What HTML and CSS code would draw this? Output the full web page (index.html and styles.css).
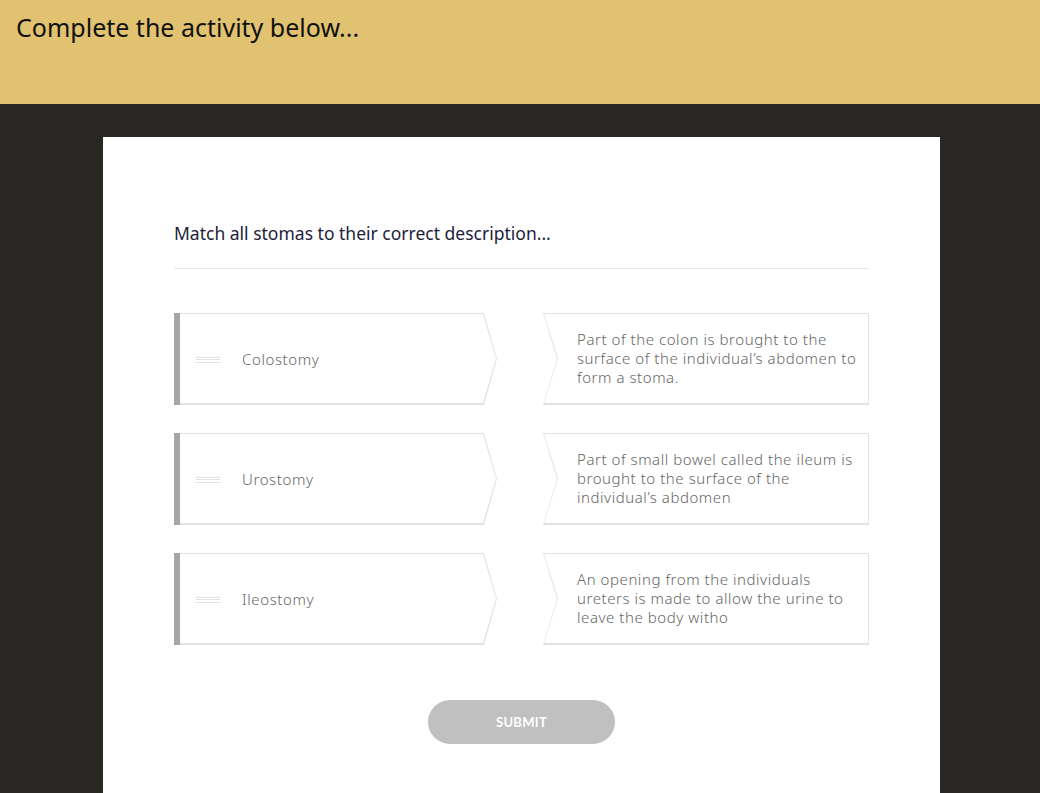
FILE: index.html
```html
<!DOCTYPE html>
<html lang="en">
  <head>
    <meta charset="UTF-8" />
    <meta name="viewport" content="width=device-width, initial-scale=1.0" />
    <title>Activity - Match</title>
    <link rel="stylesheet" href="styles.css">
  </head>
  <body>
    <header class="top-bar">
      <h1>Complete the activity below...</h1>
    </header>
    <main class="stage">
      <div class="activity">
        <p class="question">Match all stomas to their correct description...</p>
        <div class="divider"></div>

        <div class="pairs">
          <div class="term">
            <div class="term-inner">
              <span class="handle"><i></i><i></i><i></i></span>
              <span>Colostomy</span>
            </div>
          </div>
          <div class="desc">
            <div class="desc-inner">
              Part of the colon is brought to the surface of the individual’s abdomen to form a stoma.
            </div>
          </div>

          <div class="term">
            <div class="term-inner">
              <span class="handle"><i></i><i></i><i></i></span>
              <span>Urostomy</span>
            </div>
          </div>
          <div class="desc">
            <div class="desc-inner">
              Part of small bowel called the ileum is brought to the surface of the individual’s abdomen
            </div>
          </div>

          <div class="term">
            <div class="term-inner">
              <span class="handle"><i></i><i></i><i></i></span>
              <span>Ileostomy</span>
            </div>
          </div>
          <div class="desc">
            <div class="desc-inner">
              An opening from the individuals ureters is made to allow the urine to leave the body witho
            </div>
          </div>
        </div>

        <div class="actions">
          <button class="submit" disabled>SUBMIT</button>
        </div>
      </div>
    </main>
  </body>
</html>
```

FILE: styles.css
```css
body {
  margin: 0;
  font-family: "Noto Sans", Arial, sans-serif;
  background-color: #282723;
  overflow: hidden;
}
.top-bar {
  height: 104px;
  background-color: #e1c270;
  box-sizing: border-box;
  padding: 10px 16px;
}
.top-bar h1 {
  margin: 0;
  font-size: 25px;
  font-weight: 400;
  line-height: 34px;
  color: #111;
}
.stage {
  padding: 33px 100px 0 103px;
}
.activity {
  background: white;
  height: 700px;
  padding: 83px 71px 0;
}
.question {
  margin: 0;
  font-size: 17.5px;
  line-height: 26px;
  color: #1d1d3a;
  font-weight: 400;
}
.divider {
  height: 1px;
  background: #e8e8e8;
  margin-top: 22px;
}
.pairs {
  display: grid;
  grid-template-columns: 323px 326px;
  column-gap: 46px;
  row-gap: 28px;
  margin-top: 44px;
}
.term,
.desc {
  height: 92px;
  background: #e2e2e2;
  box-sizing: border-box;
}
.term {
  border-left: 6px solid #a6a6a6;
  padding: 1px 1px 2px 0;
  clip-path: polygon(0 0, calc(100% - 13px) 0, 100% 50%, calc(100% - 13px) 100%, 0 100%);
}
.term-inner {
  height: 100%;
  background: white;
  clip-path: polygon(0 0, calc(100% - 13px) 0, 100% 50%, calc(100% - 13px) 100%, 0 100%);
  display: flex;
  align-items: center;
  padding-left: 16px;
  gap: 22px;
  font-size: 15px;
  letter-spacing: 0.6px;
  color: #666;
  font-weight: 300;
}
.handle {
  display: flex;
  flex-direction: column;
  gap: 1.5px;
  width: 24px;
  margin-top: 2px;
}
.handle i {
  display: block;
  height: 1px;
  background: #e2e2e2;
}
.desc {
  padding: 1px 1px 2px 1px;
  clip-path: polygon(0 0, 100% 0, 100% 100%, 0 100%, 14px 50%);
}
.desc-inner {
  height: 100%;
  box-sizing: border-box;
  background: white;
  clip-path: polygon(0 0, 100% 0, 100% 100%, 0 100%, 14px 50%);
  display: flex;
  align-items: center;
  padding: 0 6px 0 33px;
  font-size: 15px;
  letter-spacing: 0.55px;
  line-height: 19px;
  color: #666;
  font-weight: 300;
}
.actions {
  display: flex;
  justify-content: center;
  margin-top: 55px;
}
.submit {
  width: 187px;
  height: 44px;
  border: none;
  border-radius: 22px;
  background-color: #c0c0c0;
  color: white;
  font-family: Lato, Arial, sans-serif;
  font-weight: bold;
  font-size: 13px;
  letter-spacing: 0.3px;
}
```
